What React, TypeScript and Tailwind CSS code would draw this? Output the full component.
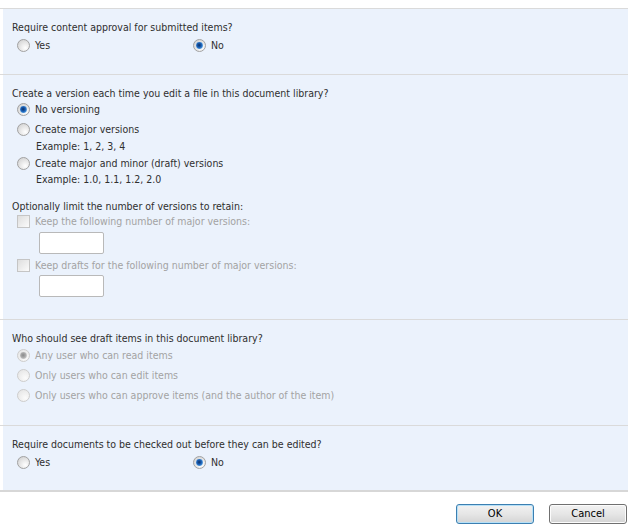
import React, { useId } from "react";

function Radio({ checked = false, disabled = false }: { checked?: boolean; disabled?: boolean }) {
  const id = useId().replace(/:/g, "");
  const bg = `bg${id}`;
  const dot = `dot${id}`;
  return (
    <svg width="13" height="13" viewBox="0 0 13 13" className="shrink-0">
      <defs>
        <radialGradient id={bg} cx="0.65" cy="0.7" r="0.75">
          <stop offset="0" stopColor={disabled ? "#fbfbfb" : "#ffffff"} />
          <stop offset="1" stopColor={disabled ? "#e6e6e6" : "#d4d4d4"} />
        </radialGradient>
        <radialGradient id={dot} cx="0.45" cy="0.45" r="0.6">
          <stop offset="0" stopColor={disabled ? "#8a8a8a" : "#0b2f66"} />
          <stop offset="0.55" stopColor={disabled ? "#a8a8a8" : "#1a5fb4"} />
          <stop offset="1" stopColor={disabled ? "#d0d0d0" : "#5aa6e8"} />
        </radialGradient>
      </defs>
      <circle cx="6.5" cy="6.5" r="6" fill={`url(#${bg})`} stroke={disabled ? "#cdcdcd" : "#a2a2a2"} strokeWidth="1" />
      {checked && <circle cx="6.5" cy="6.5" r="3.4" fill={`url(#${dot})`} />}
    </svg>
  );
}

function Checkbox() {
  return (
    <div className="w-[13px] h-[13px] shrink-0 border border-[#c5c5c5] bg-linear-to-br from-[#dedede] to-[#fbfbfb]" />
  );
}

function RadioRow({
  label,
  checked = false,
  disabled = false,
  className = "",
}: {
  label: string;
  checked?: boolean;
  disabled?: boolean;
  className?: string;
}) {
  return (
    <div className={`h-4 flex items-center ml-[5px] ${className}`}>
      <Radio checked={checked} disabled={disabled} />
      <span className={`ml-[5px] whitespace-nowrap ${disabled ? "text-[#a3a3a3]" : ""}`}>{label}</span>
    </div>
  );
}

function Section({ h, children, last = false }: { h: string; children: React.ReactNode; last?: boolean }) {
  return (
    <div className={`pl-[3px] ${last ? "border-b-2 border-[#d7d7d7]" : "border-b border-[#dadada]"}`}>
      <div className={`bg-[#ebf2fc] pl-[9px] pt-[10px] ${h}`}>{children}</div>
    </div>
  );
}

export default function App() {
  return (
    <div className="w-[640px] h-[530px] bg-white text-[10.5px] leading-4 text-[#2f2f2f] font-['DejaVu_Sans_Condensed','Liberation_Sans',sans-serif]">
      <div className="h-[8px]" />
      <div className="w-[628px] border-t border-[#dadada]">
        <Section h="h-[65px]">
          <div className="h-4 flex items-center">Require content approval for submitted items?</div>
          <div className="flex mt-[2px]">
            <div className="w-[176px]">
              <RadioRow label="Yes" />
            </div>
            <RadioRow label="No" checked />
          </div>
        </Section>

        <Section h="h-[244px]">
          <div className="h-4 flex items-center">Create a version each time you edit a file in this document library?</div>
          <RadioRow label="No versioning" checked />
          <RadioRow label="Create major versions" className="mt-[4px]" />
          <div className="h-4 flex items-center ml-[24px] mt-[1px]">Example: 1, 2, 3, 4</div>
          <RadioRow label="Create major and minor (draft) versions" className="mt-[1px]" />
          <div className="h-4 flex items-center ml-[24px]">Example: 1.0, 1.1, 1.2, 2.0</div>
          <div className="h-[15px] flex items-center mt-[11px]">Optionally limit the number of versions to retain:</div>
          <div className="h-4 flex items-center ml-[5px]">
            <Checkbox />
            <span className="ml-[5px] text-[#a3a3a3]">Keep the following number of major versions:</span>
          </div>
          <input
            readOnly
            className="block ml-[27px] mt-[3px] w-[65px] h-[22px] bg-white border border-[#b9b9b9] rounded-[2px] outline-none"
          />
          <div className="h-4 flex items-center ml-[5px] mt-[3px]">
            <Checkbox />
            <span className="ml-[5px] text-[#a3a3a3]">Keep drafts for the following number of major versions:</span>
          </div>
          <input
            readOnly
            className="block ml-[27px] mt-[2px] w-[65px] h-[22px] bg-white border border-[#b9b9b9] rounded-[2px] outline-none"
          />
        </Section>

        <Section h="h-[105px]">
          <div className="h-4 flex items-center">Who should see draft items in this document library?</div>
          <RadioRow label="Any user who can read items" checked disabled className="mt-[1px]" />
          <RadioRow label="Only users who can edit items" disabled className="mt-[4px]" />
          <RadioRow label="Only users who can approve items (and the author of the item)" disabled className="mt-[4px]" />
        </Section>

        <Section h="h-[64px]" last>
          <div className="h-4 flex items-center">Require documents to be checked out before they can be edited?</div>
          <div className="flex mt-[2px]">
            <div className="w-[176px]">
              <RadioRow label="Yes" />
            </div>
            <RadioRow label="No" checked />
          </div>
        </Section>
      </div>

      <div className="w-[628px] flex justify-end gap-[15px] pr-[1px] mt-[12px]">
        <button className="w-[78px] h-[20px] rounded-[3px] border border-[#3c7fb1] bg-linear-to-b from-[#f2f2f2] via-[#e6e6e6] to-[#d4d4d4] shadow-[inset_0_0_0_1px_#b6e0f7] text-[11px] text-black flex items-center justify-center">
          OK
        </button>
        <button className="w-[78px] h-[20px] rounded-[3px] border border-[#707070] bg-linear-to-b from-[#f2f2f2] via-[#e6e6e6] to-[#d4d4d4] shadow-[inset_0_0_0_1px_#fcfcfc] text-[11px] text-black flex items-center justify-center">
          Cancel
        </button>
      </div>
    </div>
  );
}
